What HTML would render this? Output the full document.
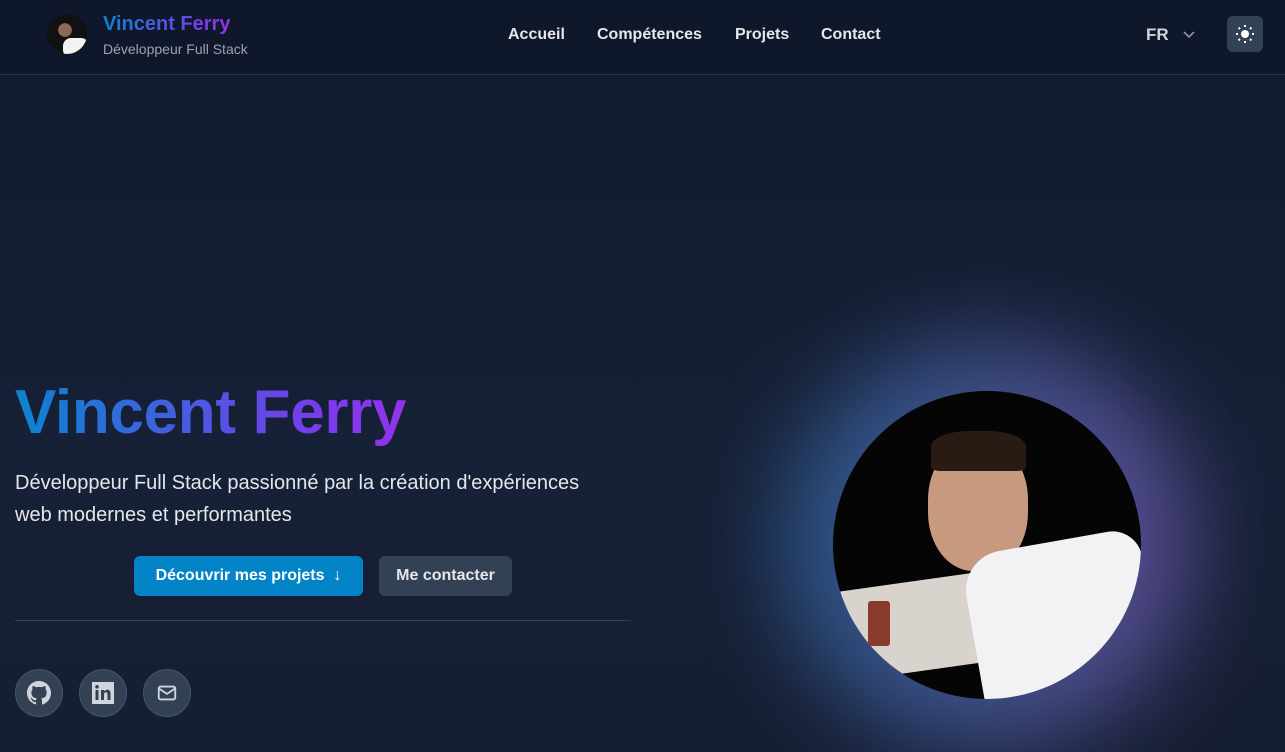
<!DOCTYPE html>
<html><head><meta charset="utf-8"><style>
*{margin:0;padding:0;box-sizing:border-box}
html,body{width:1285px;height:752px;overflow:hidden}
body{background:linear-gradient(180deg,#111a2d 0%,#162036 60%,#161e33 100%);font-family:"Liberation Sans",sans-serif;position:relative}
.hdr{position:absolute;left:0;top:0;width:1285px;height:75px;background:#0f172a;border-bottom:1px solid #2a3447}
.grad{background:linear-gradient(90deg,#0a84d0,#7c3aed 80%,#9333ea);-webkit-background-clip:text;background-clip:text;color:transparent;font-weight:bold}
.nav a{position:absolute;top:26px;color:#e5e7eb;font-size:16px;font-weight:bold;text-decoration:none}
.btn{position:absolute;top:556px;height:40px;border-radius:6px;color:#fff;font-size:16px;font-weight:bold;line-height:40px;text-align:center}
.soc{position:absolute;top:669px;width:48px;height:48px;border-radius:50%;background:#334155;border:1px solid #475569;display:flex;align-items:center;justify-content:center}
</style></head><body>
<div class="hdr">
 <div style="position:absolute;left:47px;top:14px;width:40px;height:40px;border-radius:50%;background:radial-gradient(circle at 45% 40%,#8a6a55 0 20%,#111 22%);overflow:hidden"><div style="position:absolute;left:16px;top:24px;width:26px;height:20px;background:#f3f3f3;border-radius:8px"></div></div>
 <div class="grad" style="position:absolute;left:103px;top:13px;font-size:20px">Vincent Ferry</div>
 <div style="position:absolute;left:103px;top:41px;font-size:14px;color:#9ca3af">Développeur Full Stack</div>
 <div class="nav"><a style="left:508px">Accueil</a><a style="left:597px">Compétences</a><a style="left:735px">Projets</a><a style="left:821px">Contact</a></div>
 <div style="position:absolute;left:1146px;top:25px;color:#d1d5db;font-size:17px;font-weight:bold">FR</div>
 <svg style="position:absolute;left:1182px;top:28px" width="14" height="14" viewBox="0 0 14 14"><path d="M2 4l5 5 5-5" stroke="#9ca3af" stroke-width="1.5" fill="none"/></svg>
 <div style="position:absolute;left:1227px;top:16px;width:36px;height:36px;border-radius:6px;background:#334155"></div>
 <svg style="position:absolute;left:1235px;top:24px" width="20" height="20" viewBox="0 0 20 20"><circle cx="10" cy="10" r="4" fill="#fff"/><g stroke="#fff" stroke-width="2"><path d="M10 1v2M10 17v2M1 10h2M17 10h2M3.6 3.6l1.4 1.4M15 15l1.4 1.4M3.6 16.4L5 15M15 5l1.4-1.4"/></g></svg>
</div>
<div style="position:absolute;left:782px;top:340px;width:410px;height:410px;border-radius:50%;background:linear-gradient(90deg,#3b7bc0,#5a6fc0 50%,#8a6ad0);opacity:.6;filter:blur(45px)"></div>
<div style="position:absolute;left:833px;top:391px;width:308px;height:308px;border-radius:50%;background:#050505;overflow:hidden">
 <div style="position:absolute;left:0;top:190px;width:170px;height:90px;background:#d8d3cc;transform:rotate(-8deg)"></div>
 <div style="position:absolute;left:95px;top:50px;width:100px;height:130px;border-radius:45%;background:#c79a80"></div>
 <div style="position:absolute;left:98px;top:40px;width:95px;height:40px;border-radius:40% 40% 10% 10%;background:#2a1a14"></div>
 <div style="position:absolute;left:140px;top:150px;width:180px;height:170px;border-radius:40px 30px 0 0;background:#f2f2f4;transform:rotate(-10deg)"></div>
 <div style="position:absolute;left:35px;top:210px;width:22px;height:45px;background:#8a3a2a;border-radius:3px"></div>
</div>
<div class="grad" style="position:absolute;left:15px;top:377px;font-size:62px;letter-spacing:-.3px">Vincent Ferry</div>
<div style="position:absolute;left:15px;top:467px;font-size:20px;line-height:32px;color:#e5e7eb;width:605px">Développeur Full Stack passionné par la création d'expériences web modernes et performantes</div>
<div class="btn" style="left:134px;width:229px;background:#0284c7">Découvrir mes projets &nbsp;↓</div>
<div class="btn" style="left:379px;width:133px;background:#334155;color:#e5e7eb">Me contacter</div>
<div style="position:absolute;left:15px;top:620px;width:616px;height:1px;background:#374151"></div>
<div class="soc" style="left:15px"><svg width="24" height="24" viewBox="0 0 16 16"><path fill="#d1d5db" d="M8 0C3.58 0 0 3.58 0 8c0 3.54 2.29 6.53 5.47 7.59.4.07.55-.17.55-.38v-1.33c-2.23.48-2.7-1.070-2.7-1.07-.36-.92-.89-1.17-.89-1.17-.73-.5.06-.49.06-.49.8.06 1.23.83 1.23.83.71 1.22 1.87.87 2.33.66.07-.52.28-.87.5-1.07-1.78-.2-3.64-.89-3.64-3.95 0-.87.31-1.59.82-2.15-.08-.2-.36-1.02.08-2.12 0 0 .67-.21 2.2.82a7.6 7.6 0 014 0c1.53-1.04 2.2-.82 2.2-.82.44 1.1.16 1.92.08 2.12.51.56.82 1.27.82 2.15 0 3.07-1.87 3.75-3.65 3.95.29.25.54.73.54 1.48v2.2c0 .21.15.46.55.38A8 8 0 0016 8c0-4.42-3.58-8-8-8z"/></svg></div>
<div class="soc" style="left:79px"><svg width="24" height="24" viewBox="0 0 24 24"><rect x="1" y="1" width="22" height="22" fill="#d1d5db"/><rect x="4.5" y="9" width="3" height="10" fill="#334155"/><circle cx="6" cy="5.8" r="1.8" fill="#334155"/><path d="M10 9h3v1.5c.6-1 1.7-1.8 3.3-1.8 2.6 0 3.2 1.7 3.2 4V19h-3v-5.5c0-1.3-.3-2.2-1.5-2.2S13 12.3 13 13.5V19h-3z" fill="#334155"/></svg></div>
<div class="soc" style="left:143px"><svg width="22" height="22" viewBox="0 0 24 24" fill="none" stroke="#d1d5db" stroke-width="2"><rect x="3" y="5" width="18" height="14" rx="2"/><path d="M3 7l9 6 9-6"/></svg></div>
</body></html>
